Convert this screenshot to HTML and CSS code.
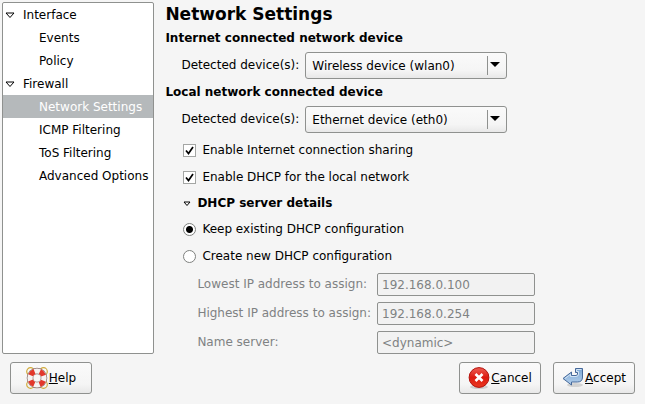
FILE: index.html
```html
<!DOCTYPE html>
<html lang="en">
<head>
    <meta charset="UTF-8">
    <title>Network Settings</title>
    <link rel="stylesheet" href="styles.css">
</head>
<body>
    <div class="main">
        <!-- Section tree -->
        <nav class="sidebar">
            <ul class="tree">
                <li>
                    <a href="#interface" class="tree-parent">
                        <svg class="arrow" viewBox="0 0 10 7"><path d="M1 1H9L5 5.500Z"/></svg>
                        Interface
                    </a>
                    <ul>
                        <li><a href="#events">Events</a></li>
                        <li><a href="#policy">Policy</a></li>
                    </ul>
                </li>
                <li>
                    <a href="#firewall" class="tree-parent">
                        <svg class="arrow" viewBox="0 0 10 7"><path d="M1 1H9L5 5.500Z"/></svg>
                        Firewall
                    </a>
                    <ul>
                        <li><a href="#network" class="selected">Network Settings</a></li>
                        <li><a href="#icmp">ICMP Filtering</a></li>
                        <li><a href="#tos">ToS Filtering</a></li>
                        <li><a href="#advanced">Advanced Options</a></li>
                    </ul>
                </li>
            </ul>
        </nav>

        <form class="settings" id="settingsForm">
            <h1>Network Settings</h1>

            <h2>Internet connected network device</h2>
            <div class="device-row">
                <label for="internetDevice">Detected device(s):</label>
                <div class="combo">
                    <select id="internetDevice">
                        <option>Wireless device (wlan0)</option>
                        <option>Ethernet device (eth0)</option>
                    </select>
                </div>
            </div>

            <h2>Local network connected device</h2>
            <div class="device-row">
                <label for="localDevice">Detected device(s):</label>
                <div class="combo">
                    <select id="localDevice">
                        <option>Ethernet device (eth0)</option>
                        <option>Wireless device (wlan0)</option>
                    </select>
                </div>
            </div>

            <div class="options">
                <label class="option"><input type="checkbox" checked> Enable Internet connection sharing</label>
                <label class="option"><input type="checkbox" checked> Enable DHCP for the local network</label>

                <details open>
                    <summary>
                        <svg class="arrow small" viewBox="0 0 8 6"><path d="M1 1H7L4 4.500Z"/></svg>
                        DHCP server details
                    </summary>
                    <label class="option"><input type="radio" name="dhcp" checked> Keep existing DHCP configuration</label>
                    <label class="option"><input type="radio" name="dhcp"> Create new DHCP configuration</label>
                    <div class="fields">
                        <label for="lowestIp">Lowest IP address to assign:</label>
                        <input type="text" id="lowestIp" value="192.168.0.100" disabled>
                        <label for="highestIp">Highest IP address to assign:</label>
                        <input type="text" id="highestIp" value="192.168.0.254" disabled>
                        <label for="nameServer">Name server:</label>
                        <input type="text" id="nameServer" value="&lt;dynamic&gt;" disabled>
                    </div>
                </details>
            </div>
        </form>
    </div>

    <!-- Dialog buttons -->
    <footer class="buttons">
        <button type="button" class="help">
            <svg class="icon" viewBox="0 0 22 22">
                <g fill="none" stroke="#d2ac3c" stroke-width="1.200">
                    <circle cx="4.500" cy="4.500" r="3.800"/><circle cx="17.500" cy="4.500" r="3.800"/>
                    <circle cx="4.500" cy="17.500" r="3.800"/><circle cx="17.500" cy="17.500" r="3.800"/>
                </g>
                <circle cx="11" cy="11" r="7" fill="#f8f8f8" stroke="#8c7470" stroke-width="6.600"/>
                <circle cx="11" cy="11" r="7" fill="none" stroke="#f6f3f2" stroke-width="5.200"/>
                <circle cx="11" cy="11" r="7" fill="none" stroke="#e2382c" stroke-width="5.200" stroke-dasharray="5.500 5.496" stroke-dashoffset="-2.748"/>
            </svg>
            <span><u>H</u>elp</span>
        </button>
        <button type="button" class="cancel">
            <svg class="icon" viewBox="0 0 22 22">
                <defs>
                    <linearGradient id="red" x1="0" y1="0" x2="0" y2="1">
                        <stop offset="0" stop-color="#ee5e54"/>
                        <stop offset=".5" stop-color="#dc1a10"/>
                        <stop offset="1" stop-color="#ea3820"/>
                    </linearGradient>
                </defs>
                <ellipse cx="11" cy="20" rx="9" ry="2" fill="#cfcfcf"/>
                <circle cx="11" cy="10.500" r="9.900" fill="url(#red)" stroke="#b3120c"/>
                <path d="M7.500 7L14.500 14M14.500 7L7.500 14" stroke="#fff" stroke-width="2.600"/>
            </svg>
            <span><u>C</u>ancel</span>
        </button>
        <button type="submit" form="settingsForm" class="accept">
            <svg class="icon" viewBox="0 0 22 22">
                <defs>
                    <linearGradient id="blue" x1="0" y1="0" x2="0" y2="1">
                        <stop offset="0" stop-color="#7ba6d3"/>
                        <stop offset="1" stop-color="#b4d0ec"/>
                    </linearGradient>
                </defs>
                <ellipse cx="13" cy="18" rx="8" ry="2" fill="#d2d2d2"/>
                <path d="M13.500 1.500H20.500V10Q20.500 15 15.500 15H9.500V18L1 11.500L9.500 5V8.500H14Q15.500 8.500 15.500 7V5.500H13.500Z" fill="url(#blue)" stroke="#46699a" stroke-linejoin="round"/>
                <path d="M3 11.500L8.500 7.300V9.500H14Q16.500 9.500 16.500 7V4.500H14.500V2.500H19.500" fill="none" stroke="#d3e4f5"/>
            </svg>
            <span><u>A</u>ccept</span>
        </button>
    </footer>
</body>
</html>
```
FILE: styles.css
```css
* {
    box-sizing: border-box;
    margin: 0;
    padding: 0;
}
body {
    font-family: "DejaVu Sans", sans-serif;
    font-size: 12px;
    line-height: 15px;
    color: #000;
    background-color: #f5f5f5;
    min-height: 100vh;
    display: flex;
    flex-direction: column;
}
.main {
    flex: 1;
    display: flex;
    gap: 11px;
    padding: 2px 2px 0;
}
.sidebar {
    background: white;
    border: 1px solid #8f918f;
    border-radius: 2px;
}
ul {
    list-style: none;
}
.tree a {
    display: block;
    line-height: 21px;
    padding: 2px 5px 0 36px;
    color: #000;
    text-decoration: none;
}
.tree a.tree-parent {
    display: flex;
    align-items: center;
    gap: 8px;
    padding-left: 2px;
}
.tree a.selected {
    background-color: #b5b9bb;
    color: white;
}
.arrow {
    width: 10px;
    height: 7px;
    fill: white;
    stroke: #000;
}
.arrow.small {
    width: 8px;
    height: 6px;
}
.settings {
    flex: 1;
}
h1 {
    font-size: 17px;
    line-height: 24px;
    margin-bottom: 5px;
}
h2 {
    font-size: 12px;
    line-height: 15px;
}
.device-row {
    display: flex;
    align-items: center;
    gap: 6px;
    padding: 6px 0 6px 16px;
}
.combo {
    position: relative;
    width: 202px;
}
.combo select {
    appearance: none;
    width: 100%;
    height: 27px;
    padding: 1px 24px 0 6px;
    border: 1px solid #8f918f;
    border-radius: 3px;
    background: linear-gradient(#fafafa, #f5f5f5 70%, #e8e8e8);
    font: inherit;
    color: #000;
}
/* separator and arrow of the drop-down */
.combo::before {
    content: "";
    position: absolute;
    top: 4px;
    bottom: 4px;
    right: 19px;
    border-left: 1px solid #8f918f;
    pointer-events: none;
}
.combo::after {
    content: "";
    position: absolute;
    top: 10px;
    right: 7px;
    border: 5px solid transparent;
    border-top-color: #000;
    border-bottom: 0;
    pointer-events: none;
}
.options {
    margin-top: -2px;
    padding-left: 18px;
}
.option {
    display: flex;
    align-items: center;
    gap: 6px;
    height: 27px;
}
.option input {
    appearance: none;
    width: 13px;
    height: 13px;
    border: 1px solid #a4a6a4;
    background: white center no-repeat;
}
.option input[type="checkbox"]:checked {
    background-image: url("data:image/svg+xml,%3Csvg xmlns='http://www.w3.org/2000/svg' width='11' height='11'%3E%3Cpath d='M2 5.500L4.500 8.500L9 2' fill='none' stroke='%23000' stroke-width='1.700'/%3E%3C/svg%3E");
}
.option input[type="radio"] {
    border-color: #7f817f;
    border-radius: 50%;
}
.option input[type="radio"]:checked {
    background-image: radial-gradient(circle, #000 3px, transparent 4px);
}
summary {
    display: flex;
    align-items: center;
    gap: 6px;
    height: 25px;
    font-weight: bold;
    list-style: none;
}
.fields {
    display: grid;
    grid-template-columns: max-content 158px;
    align-items: center;
    gap: 6px;
    padding: 3px 0 0 14px;
    color: #7f8283;
}
.fields input {
    height: 23px;
    width: 100%;
    padding: 0 4px;
    border: 1px solid #8f918f;
    border-radius: 2px;
    background: #f2f2f2;
    font: inherit;
    color: #7f8283;
}
.buttons {
    display: flex;
    gap: 12px;
    padding: 8px 10px 10px;
}
button {
    display: flex;
    align-items: center;
    justify-content: center;
    gap: 1px;
    width: 82px;
    height: 32px;
    border: 1px solid #8f918f;
    border-radius: 3px;
    background: linear-gradient(#fafafa, #f5f5f5 70%, #e8e8e8);
    font: inherit;
    color: #000;
}
.help {
    margin-right: auto;
}
.icon {
    width: 22px;
    height: 22px;
}
```
